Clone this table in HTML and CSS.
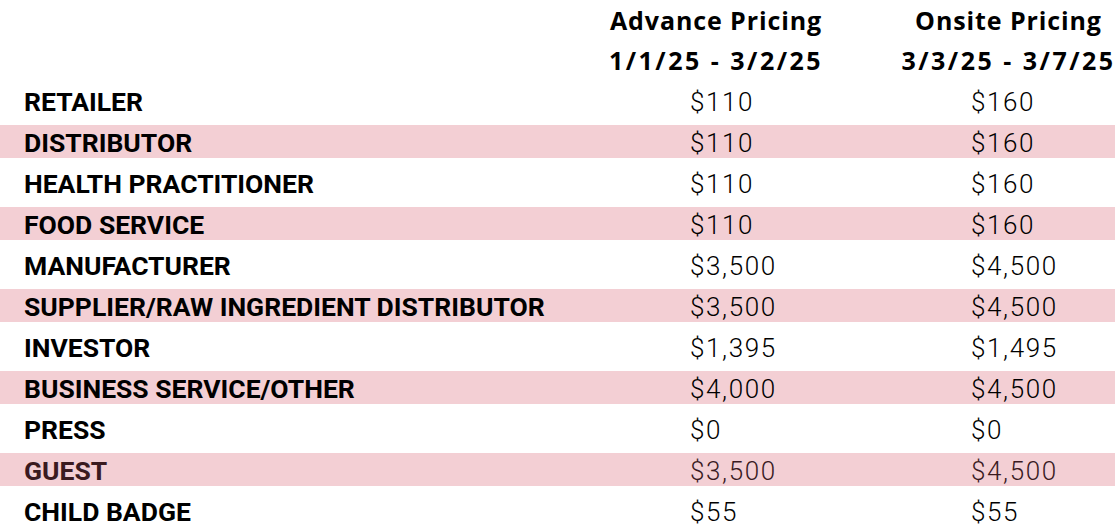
FILE: index.html
```html
<!DOCTYPE html>
<html lang="en">
<head>
<meta charset="utf-8">
<title>Pricing</title>
<link rel="stylesheet" href="styles.css">
</head>
<body>
<div class="pricing">
  <div class="head">
    <div class="head-cell"><span class="head-title">Advance Pricing</span><span class="head-dates">1/1/25 - 3/2/25</span></div>
    <div class="head-cell"><span class="head-title">Onsite Pricing</span><span class="head-dates">3/3/25 - 3/7/25</span></div>
  </div>
  <div class="rows">
    <div class="row"><span class="label">RETAILER</span><span class="price">$110</span><span class="price">$160</span></div>
    <div class="row alt"><span class="label">DISTRIBUTOR</span><span class="price">$110</span><span class="price">$160</span></div>
    <div class="row"><span class="label">HEALTH PRACTITIONER</span><span class="price">$110</span><span class="price">$160</span></div>
    <div class="row alt"><span class="label">FOOD SERVICE</span><span class="price">$110</span><span class="price">$160</span></div>
    <div class="row"><span class="label">MANUFACTURER</span><span class="price">$3,500</span><span class="price">$4,500</span></div>
    <div class="row alt"><span class="label">SUPPLIER/RAW INGREDIENT DISTRIBUTOR</span><span class="price">$3,500</span><span class="price">$4,500</span></div>
    <div class="row"><span class="label">INVESTOR</span><span class="price">$1,395</span><span class="price">$1,495</span></div>
    <div class="row alt"><span class="label">BUSINESS SERVICE/OTHER</span><span class="price">$4,000</span><span class="price">$4,500</span></div>
    <div class="row"><span class="label">PRESS</span><span class="price">$0</span><span class="price">$0</span></div>
    <div class="row alt guest"><span class="label">GUEST</span><span class="price">$3,500</span><span class="price">$4,500</span></div>
    <div class="row"><span class="label">CHILD BADGE</span><span class="price">$55</span><span class="price">$55</span></div>
  </div>
</div>
</body>
</html>
```
FILE: styles.css
```css
html, body {
  margin: 0;
  padding: 0;
  background: #ffffff;
}

.pricing {
  width: 1117px;
  color: #000000;
}

.head {
  display: grid;
  grid-template-columns: 240px 217px;
  column-gap: 64px;
  justify-content: end;
  height: 84px;
}

.head-cell {
  display: flex;
  flex-direction: column;
  align-items: center;
  font-family: "Open Sans", "Liberation Sans", sans-serif;
  font-weight: 700;
  font-size: 25px;
  line-height: 40px;
  white-space: nowrap;
}

.head-title {
  letter-spacing: 0.9px;
}

.head-dates {
  letter-spacing: 2.5px;
}

.rows {
  display: flex;
  flex-direction: column;
  gap: 8px;
}

.row {
  display: grid;
  grid-template-columns: 666px 281px 1fr;
  align-items: center;
  box-sizing: border-box;
  height: 33px;
  padding-left: 24px;
  padding-top: 2px;
  margin-right: 2px;
}

.row.alt {
  background: #f3cfd4;
}

.label {
  font-family: "Roboto", "Liberation Sans", sans-serif;
  font-weight: 700;
  font-size: 26.5px;
  white-space: nowrap;
}

.price {
  font-family: "Roboto", "Liberation Sans", sans-serif;
  font-weight: 300;
  font-size: 26px;
  letter-spacing: 1.6px;
}

.guest {
  color: #3a1a1f;
}
```
